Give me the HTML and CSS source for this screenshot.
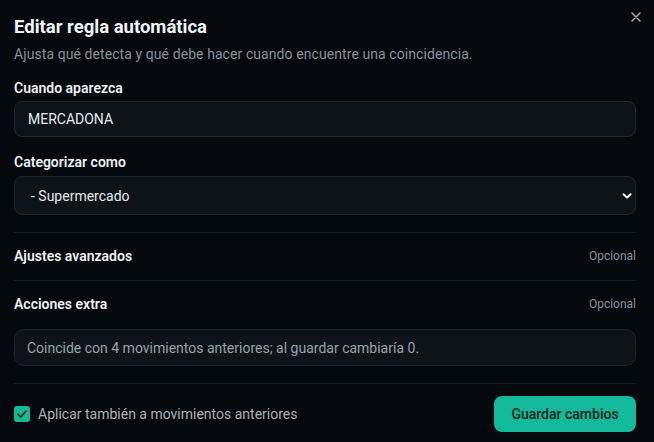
FILE: index.html
```html
<!DOCTYPE html>
<html lang="es">
<head>
<meta charset="utf-8">
<title>Editar regla automática</title>
<link rel="stylesheet" href="styles.css">
</head>
<body>
<div class="dialog">
  <button class="close" aria-label="Cerrar">
    <svg width="10" height="10" viewBox="0 0 10 10"><path d="M1 1L9 9M9 1L1 9" stroke="#aab3bd" stroke-width="1.4" stroke-linecap="round"/></svg>
  </button>
  <h1 class="title">Editar regla automática</h1>
  <p class="subtitle">Ajusta qué detecta y qué debe hacer cuando encuentre una coincidencia.</p>

  <label class="label">Cuando aparezca</label>
  <div class="field">MERCADONA</div>

  <label class="label label-second">Categorizar como</label>
  <div class="select-wrap">
    <div class="select">- Supermercado</div>
    <svg class="chevron" width="10" height="6" viewBox="0 0 10 6"><path d="M1.5 1.2L5 4.6L8.5 1.2" fill="none" stroke="#ffffff" stroke-width="2" stroke-linecap="round" stroke-linejoin="round"/></svg>
  </div>

  <div class="section section-first">
    <span class="section-title">Ajustes avanzados</span>
    <span class="optional">Opcional</span>
  </div>
  <div class="section section-last">
    <span class="section-title">Acciones extra</span>
    <span class="optional">Opcional</span>
  </div>

  <div class="info">Coincide con 4 movimientos anteriores; al guardar cambiaría 0.</div>

  <div class="footer">
    <label class="check">
      <span class="box">
        <svg width="12" height="10" viewBox="0 0 12 10"><path d="M2 5.2L4.8 8L10 2" fill="none" stroke="#06241d" stroke-width="1.6" stroke-linecap="round" stroke-linejoin="round"/></svg>
      </span>
      <span class="check-label">Aplicar también a movimientos anteriores</span>
    </label>
    <button class="primary">Guardar cambios</button>
  </div>
</div>
</body>
</html>
```

FILE: styles.css
```css
* { box-sizing: border-box; }
html, body {
  margin: 0;
  padding: 0;
  background: #05080d;
  font-family: Roboto, "Noto Sans", sans-serif;
  color: #e8edf1;
}
.dialog {
  position: relative;
  width: 654px;
  height: 442px;
  padding: 15px 18px 0 14px;
  display: flex;
  flex-direction: column;
}
.close {
  position: absolute;
  top: 12px;
  right: 13px;
  width: 10px;
  height: 10px;
  padding: 0;
  border: 0;
  background: none;
  display: flex;
}
.title {
  margin: 0;
  font-size: 18.5px;
  line-height: 24px;
  font-weight: 700;
  color: #f2f5f8;
}
.subtitle {
  margin: 5px 0 0;
  font-size: 14px;
  line-height: 20px;
  letter-spacing: 0.08px;
  color: #8593a0;
}
.label {
  display: block;
  margin-top: 14px;
  font-size: 14px;
  line-height: 20px;
  font-weight: 600;
  color: #edf1f4;
}
.label-second { margin-top: 15px; }
.field {
  margin-top: 3px;
  height: 36px;
  border: 1px solid #1d262e;
  border-radius: 8px;
  background: #0d1318;
  padding: 0 13px;
  display: flex;
  align-items: center;
  font-size: 14px;
  color: #e6ebef;
}
.select-wrap {
  position: relative;
  margin-top: 4px;
}
.select {
  height: 39px;
  border: 1px solid #1d262e;
  border-radius: 8px;
  background: #0d1318;
  padding: 0 16px;
  display: flex;
  align-items: center;
  font-size: 14px;
  color: #e6ebef;
}
.chevron {
  position: absolute;
  right: 4px;
  top: 17px;
}
.section {
  display: flex;
  justify-content: space-between;
  align-items: center;
  padding: 13px 0 14px;
  border-top: 1px solid #131a21;
}
.section-first { margin-top: 17px; }
.section-last { padding-bottom: 0; }
.section-title {
  font-size: 14px;
  line-height: 20px;
  font-weight: 600;
  color: #edf1f4;
}
.optional {
  font-size: 12px;
  line-height: 20px;
  color: #8592a0;
}
.info {
  margin-top: 15px;
  height: 37px;
  border: 1px solid #1a232b;
  border-radius: 10px;
  background: #0d1318;
  padding: 0 12px;
  display: flex;
  align-items: center;
  font-size: 14px;
  color: #97a3ae;
}
.footer {
  margin-top: 17px;
  border-top: 1px solid #131a21;
  padding-top: 12px;
  display: flex;
  justify-content: space-between;
  align-items: center;
}
.check {
  display: flex;
  align-items: center;
  gap: 8px;
}
.box {
  width: 16px;
  height: 16px;
  border-radius: 3px;
  background: #14b896;
  display: flex;
  align-items: center;
  justify-content: center;
}
.check-label {
  font-size: 14px;
  color: #a9b3bd;
}
.primary {
  width: 142px;
  height: 36px;
  border: 0;
  border-radius: 8px;
  background: #12b99a;
  color: #07231d;
  font-family: Roboto, "Noto Sans", sans-serif;
  font-size: 14px;
  font-weight: 500;
}
```
